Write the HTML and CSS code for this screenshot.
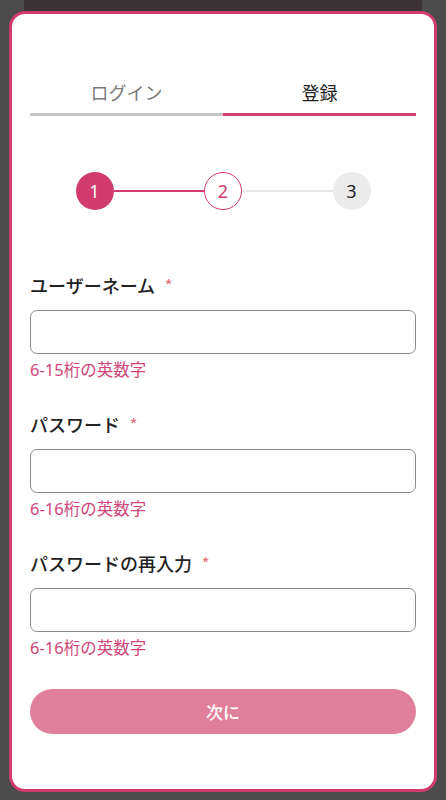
FILE: index.html
```html
<!DOCTYPE html>
<html lang="ja">
<head>
<meta charset="utf-8">
<title>登録</title>
<link rel="stylesheet" href="styles.css">
</head>
<body>
<div class="backdrop">
  <div class="card">
    <div class="tabs">
      <div class="tab">ログイン</div>
      <div class="tab active">登録</div>
    </div>
    <div class="stepper">
      <div class="step done">1</div>
      <div class="line on"></div>
      <div class="step current">2</div>
      <div class="line"></div>
      <div class="step todo">3</div>
    </div>
    <form class="form">
      <div class="field">
        <label class="label">ユーザーネーム<span class="req">*</span></label>
        <input class="input" type="text">
        <div class="hint">6-15桁の英数字</div>
      </div>
      <div class="field">
        <label class="label">パスワード<span class="req">*</span></label>
        <input class="input" type="password">
        <div class="hint">6-16桁の英数字</div>
      </div>
      <div class="field">
        <label class="label">パスワードの再入力<span class="req">*</span></label>
        <input class="input" type="password">
        <div class="hint">6-16桁の英数字</div>
      </div>
      <button class="next" type="button">次に</button>
    </form>
  </div>
</div>
</body>
</html>
```
FILE: styles.css
```css
* { box-sizing: border-box; }
html, body { margin: 0; padding: 0; }
body {
  width: 446px;
  height: 800px;
  overflow: hidden;
  font-family: "Noto Sans CJK JP", "Noto Sans", sans-serif;
  background:
    linear-gradient(to bottom, #3a3234 0, #3a3234 14px, transparent 14px) 24px 0 / 398px 14px no-repeat,
    #4c4c4c;
}
.backdrop {
  padding: 11px 9px 8px;
}
.card {
  height: 781px;
  background: #fff;
  border: 3px solid #d23b6e;
  border-radius: 16px;
  padding: 0 18px;
}
.tabs {
  display: flex;
  padding-top: 65px;
}
.tab {
  flex: 1;
  text-align: center;
  font-size: 18px;
  line-height: 26px;
  color: #7a7a7a;
  padding-bottom: 8px;
  border-bottom: 3px solid #c6c6c6;
}
.tab.active {
  color: #222;
  border-bottom-color: #d23b6e;
}
.stepper {
  display: flex;
  align-items: center;
  width: 295px;
  margin: 56px auto 0;
}
.step {
  width: 38px;
  height: 38px;
  border-radius: 50%;
  flex: none;
  display: flex;
  align-items: center;
  justify-content: center;
  font-size: 18px;
  font-family: "Noto Sans", "Open Sans", sans-serif;
}
.step.done { background: #d23b6e; color: #fff; }
.step.current { background: #fff; border: 1.5px solid #d23b6e; color: #d23b6e; }
.step.todo { background: #ebebeb; color: #222; }
.line {
  flex: 1;
  height: 2px;
  background: #e6e6e6;
}
.line.on { background: #d23b6e; }
.form {
  margin-top: 62px;
  display: flex;
  flex-direction: column;
}
.field {
  display: flex;
  flex-direction: column;
  margin-bottom: 30px;
}
.label {
  font-size: 18px;
  line-height: 26px;
  font-weight: 500;
  color: #222;
}
.req {
  color: #e8737c;
  font-size: 15px;
  margin-left: 10px;
  vertical-align: 2px;
}
.input {
  margin-top: 12px;
  height: 44px;
  border: 1.5px solid #8c8c8c;
  border-radius: 7px;
  background: #fff;
  font-size: 16px;
  padding: 0 10px;
}
.hint {
  margin-top: 5px;
  font-family: "Noto Sans", "Noto Sans CJK JP", sans-serif;
  font-size: 16.5px;
  line-height: 22px;
  color: #d0467a;
}
.next {
  height: 45px;
  border: none;
  border-radius: 23px;
  background: #e07f9b;
  color: #fff;
  font-family: inherit;
  font-size: 17px;
  font-weight: 500;
}
```
